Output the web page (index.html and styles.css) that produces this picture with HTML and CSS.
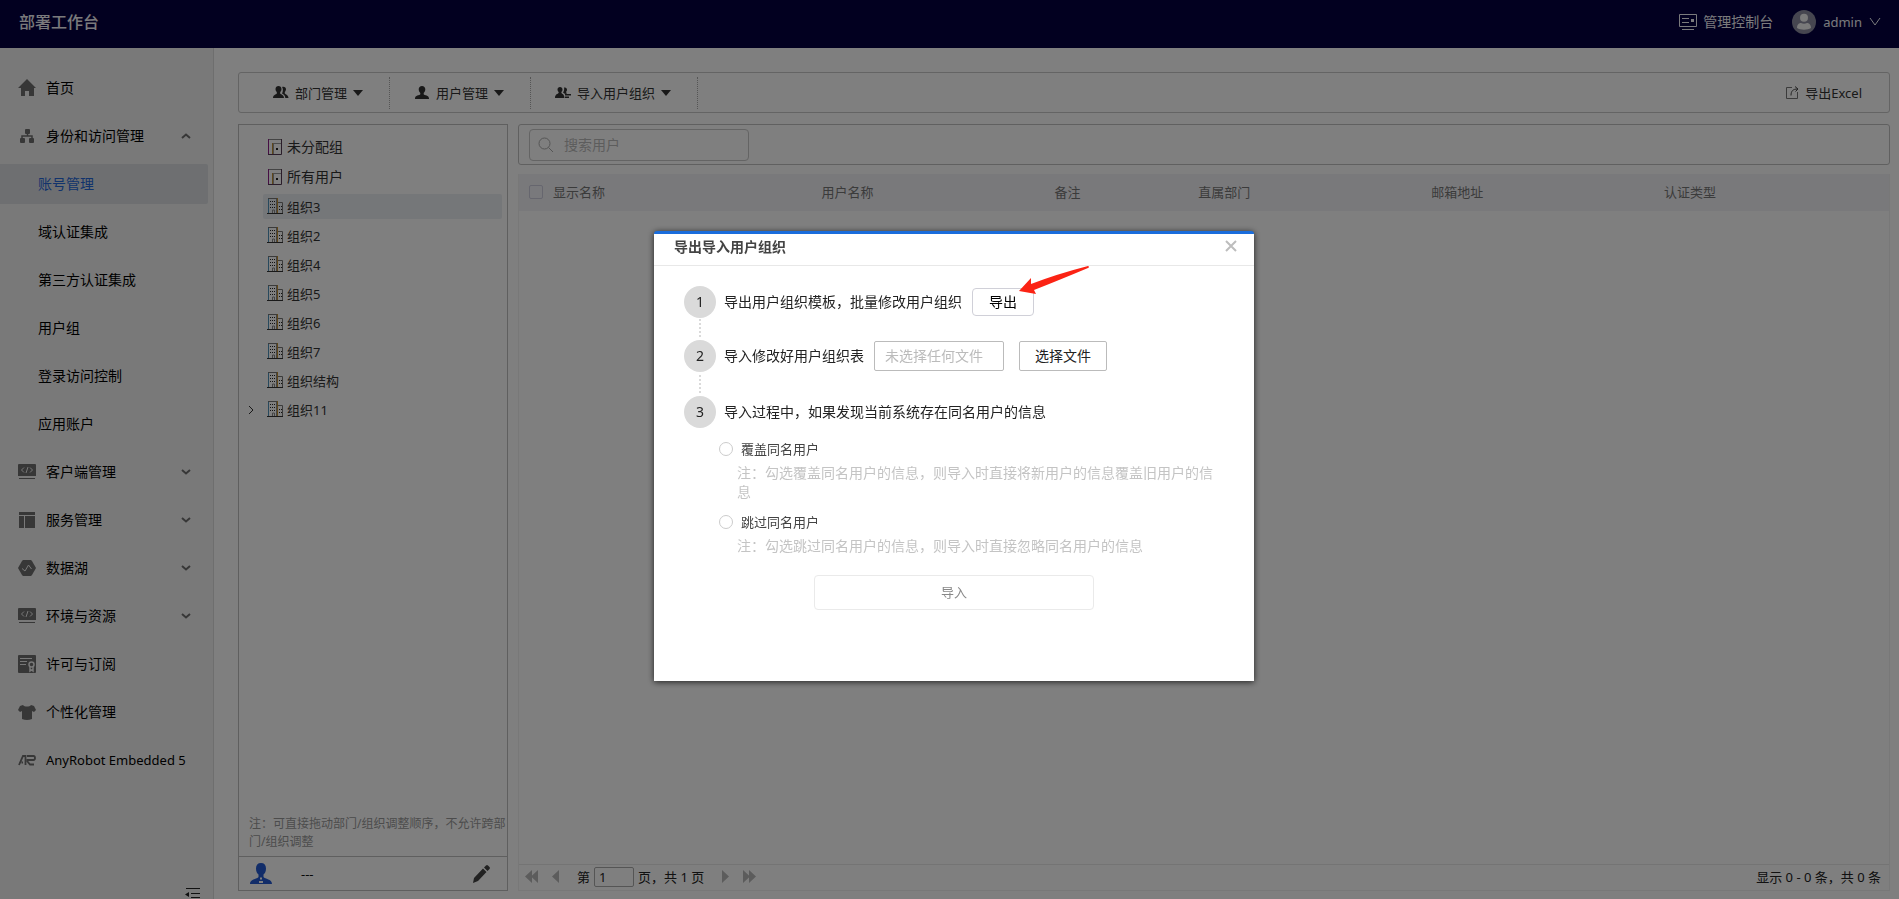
FILE: index.html
```html
<!DOCTYPE html>
<html lang="zh-CN">
<head>
<meta charset="utf-8">
<title>部署工作台</title>
<link rel="stylesheet" href="styles.css">
</head>
<body>
<svg class="sprite" aria-hidden="true">
  <symbol id="i-code" viewBox="0 0 18 16"><path fill="currentColor" fill-rule="evenodd" d="M1 0h16a1 1 0 0 1 1 1v11H0V1a1 1 0 0 1 1-1zM1 14h16v1H1z"/><path fill="none" stroke="#f0f0f0" d="M6 3.500L3.500 6 6 8.500M12 3.500L14.500 6 12 8.500M10 3L8 9"/></symbol>
  <symbol id="i-down" viewBox="0 0 10 6"><path fill="none" stroke="currentColor" stroke-width="2" d="M1 1l4 3.500L9 1"/></symbol>
  <symbol id="i-caret" viewBox="0 0 10 6"><path fill="currentColor" d="M0 0h10L5 6z"/></symbol>
  <symbol id="i-door" viewBox="0 0 16 17"><path fill="none" stroke="#888" d="M1 .5h13"/><path fill="none" stroke="#8c1c88" d="M.5 0v16"/><path fill="none" stroke="#553a55" d="M0 15.500h13.500V0"/><path fill="none" stroke="#c08f30" d="M4.500 15V4"/><path fill="none" stroke="#999" d="M5 4.500h8M5.500 5v10"/><path fill="#222" d="M8 9h2v2H8z"/></symbol>
  <symbol id="i-org" viewBox="0 0 17 17"><path fill="none" stroke="#777" d="M1 .5h9M11 4.500h4.500V15"/><path fill="none" stroke="#4f93ba" d="M1.500 1v14"/><path fill="none" stroke="#c08f30" d="M10.500 0v15"/><path fill="none" stroke="#888" d="M9.500 1v14M5.500 15v-3h2v3"/><path stroke="#333" d="M0 15.500h16"/><path fill="none" stroke="#222" stroke-dasharray="1 1" d="M3 3.500h6M3 6.500h6M3 9.500h6M12 8.500h3M12 11.500h3"/></symbol>
  <symbol id="i-person" viewBox="0 0 14 13"><path fill="currentColor" d="M7 0c2 0 3.300 1.300 3.300 3.300 0 1.700-.8 3-1.600 3.700v1.300c.8 1.200 5.300 1 5.300 4.200v.5H0v-.5c0-3.200 4.500-3 5.300-4.200V7c-.8-.7-1.600-2-1.600-3.700C3.700 1.300 5 0 7 0z"/></symbol>
</svg>

<header class="topbar">
  <h1 class="brand">部署工作台</h1>
  <a class="top-link" href="#"><svg width="18" height="17" viewBox="0 0 18 17"><path fill="none" stroke="currentColor" d="M.5.5h17v12H.5zM3 15.500h12M3 4.500h7M3 8.500h7"/><path fill="currentColor" d="M12 5h3v3h-3z"/></svg>管理控制台</a>
  <button class="user" type="button"><svg width="24" height="24" viewBox="0 0 24 24"><circle cx="12" cy="12" r="12" fill="#8d8da0"/><circle cx="12" cy="7.800" r="4" fill="#f4f4f4"/><path fill="#f4f4f4" d="M5 18c0-4 2.500-5 4-5 2 1 4 1 6 0 1.500 0 4 1 4 5-3.500 2.300-10.500 2.300-14 0z"/></svg><span class="latin">admin</span><svg width="12" height="8" viewBox="0 0 12 8"><path fill="none" stroke="currentColor" d="M1 0l5 7 5-7"/></svg></button>
</header>

<div class="shell">
  <nav class="sidebar">
    <a class="item" href="#"><svg width="18" height="18" viewBox="0 0 18 18"><path fill="currentColor" d="M9 0l9 9h-2v8h-5v-5H7v5H3V9H0z"/></svg><span>首页</span></a>
    <button class="item" type="button"><svg width="18" height="18" viewBox="0 0 18 18"><g fill="currentColor"><rect x="7" y="2" width="5" height="5" rx="1"/><rect x="2" y="11" width="5" height="5" rx="1"/><rect x="11" y="11" width="5" height="5" rx="1"/></g><path fill="none" stroke="currentColor" stroke-width="1.500" d="M4 12V9h10v3M9.500 6v3"/></svg><span>身份和访问管理</span><svg class="chev up" width="10" height="6"><use href="#i-down"/></svg></button>
    <a class="item sub active" href="#">账号管理</a>
    <a class="item sub" href="#">域认证集成</a>
    <a class="item sub" href="#">第三方认证集成</a>
    <a class="item sub" href="#">用户组</a>
    <a class="item sub" href="#">登录访问控制</a>
    <a class="item sub" href="#">应用账户</a>
    <button class="item" type="button"><svg width="18" height="16"><use href="#i-code"/></svg><span>客户端管理</span><svg class="chev" width="10" height="6"><use href="#i-down"/></svg></button>
    <button class="item" type="button"><svg width="18" height="16" viewBox="0 0 18 16"><path fill="currentColor" d="M1 0h16v3H1zM1 4h5v12H1zM7 4h10v12H7z"/></svg><span>服务管理</span><svg class="chev" width="10" height="6"><use href="#i-down"/></svg></button>
    <button class="item" type="button"><svg width="18" height="16" viewBox="0 0 18 16"><path fill="currentColor" d="M5 0h8l1 1 4 7-4 7-1 1H5l-1-1-4-7 4-7z"/><path fill="none" stroke="#f0f0f0" d="M4 8.500L7 11l3.500-6 3 4"/></svg><span>数据湖</span><svg class="chev" width="10" height="6"><use href="#i-down"/></svg></button>
    <button class="item" type="button"><svg width="18" height="16"><use href="#i-code"/></svg><span>环境与资源</span><svg class="chev" width="10" height="6"><use href="#i-down"/></svg></button>
    <a class="item" href="#"><svg width="18" height="18" viewBox="0 0 18 18"><rect width="18" height="18" rx="1" fill="currentColor"/><path stroke="#f0f0f0" d="M2 3.500h12M2 6.500h7M2 9.500h6"/><circle cx="13.500" cy="9.500" r="2.500" fill="none" stroke="#f0f0f0" stroke-width="1.500"/><path fill="none" stroke="#f0f0f0" stroke-width="1.500" d="M12 11.500V16l1.500-1 1.500 1v-4.500"/></svg><span>许可与订阅</span></a>
    <a class="item" href="#"><svg width="18" height="15" viewBox="0 0 18 15"><path fill="currentColor" d="M5 0c1.500 2 6.500 2 8 0l3 1 2 4-2 2-2-1v8q-5 2-10 0V6L2 7 0 5l2-4z"/></svg><span>个性化管理</span></a>
    <a class="item" href="#"><svg width="18" height="11" viewBox="0 0 18 11"><path fill="none" stroke="currentColor" stroke-width="1.800" d="M1 10l4-9h2.500v9M3.500 7.500H5M9 1h6.500q1.500 0 1.500 2t-1.500 2H9.500v1.500L12 9.500h4"/></svg><span class="latin">AnyRobot Embedded 5</span></a>
    <button class="fold" type="button" aria-label="收起"><svg width="15" height="11" viewBox="0 0 15 11"><path fill="none" stroke="#222" d="M1 .5h14M6 5.500h9M6 9.500h9"/><path fill="#222" d="M4 4v5L0 6.500z"/></svg></button>
  </nav>

  <main class="content">
    <div class="toolbar">
      <button class="tool" type="button"><svg width="16" height="13" viewBox="0 0 16 13"><path fill="currentColor" d="M5.500 0c1.700 0 3 1.200 3 3 0 1.500-.7 2.500-1.300 3v1.500c.8 1.200 3.800 1.200 3.800 4.500H0c0-3.300 3-3.300 3.800-4.500V6C3.200 5.500 2.500 4.500 2.500 3c0-1.800 1.300-3 3-3zM9 1c2.300-.8 4 .3 4 2.300 0 1.200-.6 2.200-1.200 2.700v1.500c.8 1 3.700 1.500 3.700 4.500h-3.200c0-2.500-1.500-3.500-3.300-4.500.8-1 1.500-4.500 0-6.500z"/></svg><span>部门管理</span><svg width="10" height="6"><use href="#i-caret"/></svg></button>
      <button class="tool" type="button"><svg width="16" height="13"><use href="#i-person"/></svg><span>用户管理</span><svg width="10" height="6"><use href="#i-caret"/></svg></button>
      <button class="tool" type="button"><svg width="16" height="13" viewBox="0 0 16 13"><path fill="currentColor" d="M5 1c1.500 0 2.500 1 2.500 2.600 0 1.200-.6 2-1.100 2.500v1c.7 1 3 1 3 4.900H0c0-3.900 2.900-3.900 3.600-4.900v-1C3.100 5.600 2.500 4.800 2.500 3.600 2.500 2 3.500 1 5 1zM9 1.500c2-.5 3 .7 3 2.200 0 1-.5 1.800-1 2.200l1 1.600-2 .5L8 6.500c1-1 1.500-3.500 1-5zM10 8h6v1.500h-6zM10 10.500h4V12h-4z"/></svg><span>导入用户组织</span><svg width="10" height="6"><use href="#i-caret"/></svg></button>
      <button class="export" type="button"><svg width="13" height="13" viewBox="0 0 13 13"><path fill="none" stroke="#777" d="M6 1.500H.5v11h11V6"/><path fill="none" stroke="#444" d="M5 9.500C5 5 7 3 11.500 3M9 .5l3 2.500-2.500 2.500"/></svg>导出Excel</button>
    </div>

    <div class="columns">
      <section class="tree-panel">
        <ul class="tree">
          <li class="node root"><svg width="16" height="17"><use href="#i-door"/></svg>未分配组</li>
          <li class="node root"><svg width="16" height="17"><use href="#i-door"/></svg>所有用户</li>
          <li class="node selected"><svg width="17" height="17"><use href="#i-org"/></svg>组织3</li>
          <li class="node"><svg width="17" height="17"><use href="#i-org"/></svg>组织2</li>
          <li class="node"><svg width="17" height="17"><use href="#i-org"/></svg>组织4</li>
          <li class="node"><svg width="17" height="17"><use href="#i-org"/></svg>组织5</li>
          <li class="node"><svg width="17" height="17"><use href="#i-org"/></svg>组织6</li>
          <li class="node"><svg width="17" height="17"><use href="#i-org"/></svg>组织7</li>
          <li class="node"><svg width="17" height="17"><use href="#i-org"/></svg>组织结构</li>
          <li class="node parent"><svg class="arrow" width="6" height="10" viewBox="0 0 6 10"><path fill="none" stroke="currentColor" d="M1 1l4 4-4 4"/></svg><svg width="17" height="17"><use href="#i-org"/></svg>组织11</li>
        </ul>
        <p class="tip">注：可直接拖动部门/组织调整顺序，不允许跨部门/组织调整</p>
        <div class="manager">
          <svg width="22" height="21" viewBox="0 0 22 21"><path fill="#245bd2" d="M11 0c3.300 0 5 2 5 5.500 0 3-1 5-2.500 6V14c1.500 2 8.500 2 8.500 7H0c0-5 7-5 8.500-7v-2.500C7 10.500 6 8.500 6 5.500 6 2 7.700 0 11 0z"/><path fill="#fff" d="M10 14.500h2v2h-2zM9 18h4v2H9z"/></svg>
          <span>---</span>
          <button class="edit" type="button" aria-label="编辑"><svg width="17" height="18" viewBox="0 0 17 18"><path fill="#444" d="M0 18l1-5 9-9.500 3.500 3.500L5 16zM11 2.500L13 .5q1-.8 2 0l1.500 1.500q.8 1 0 2L14.500 6z"/></svg></button>
        </div>
      </section>

      <section class="list-panel">
        <div class="searchbar">
          <label class="search"><svg width="16" height="16" viewBox="0 0 16 16"><circle cx="6.500" cy="6.500" r="5.500" fill="none" stroke="currentColor"/><path stroke="currentColor" d="M10.500 10.500L15 15"/></svg><input type="text" placeholder="搜索用户" aria-label="搜索用户"></label>
        </div>
        <div class="grid">
          <table>
            <thead><tr>
              <th class="w-name"><label class="check"><input type="checkbox">显示名称</label></th>
              <th class="w-col">用户名称</th><th class="w-note">备注</th><th class="w-col">直属部门</th><th class="w-col">邮箱地址</th><th class="w-col">认证类型</th>
            </tr></thead>
          </table>
          <div class="pager">
            <button type="button" aria-label="首页"><svg width="14" height="13" viewBox="0 0 14 13"><path fill="currentColor" d="M7 0v13L0 6.500zM13 0v13L6 6.500z"/></svg></button>
            <button type="button" aria-label="上一页"><svg width="14" height="13" viewBox="0 0 14 13"><path fill="currentColor" d="M10 0v13L3 6.500z"/></svg></button>
            <label class="page-no">第<input type="text" value="1">页，共 1 页</label>
            <button type="button" aria-label="下一页"><svg width="14" height="13" viewBox="0 0 14 13"><path fill="currentColor" d="M4 0v13l7-6.500z"/></svg></button>
            <button type="button" aria-label="末页"><svg width="14" height="13" viewBox="0 0 14 13"><path fill="currentColor" d="M1 0v13l7-6.500zM7 0v13l7-6.500z"/></svg></button>
            <span class="total">显示 0 - 0 条，共 0 条</span>
          </div>
        </div>
      </section>
    </div>
  </main>
</div>

<div class="mask">
  <section class="dialog" role="dialog" aria-labelledby="dlg-title">
    <div class="dialog-head">
      <h2 id="dlg-title">导出导入用户组织</h2>
      <button class="close" type="button" aria-label="关闭"><svg width="12" height="12" viewBox="0 0 12 12"><path fill="none" stroke="#bdbdbd" stroke-width="2" d="M1 1l10 10M11 1L1 11"/></svg></button>
    </div>
    <div class="dialog-body">
      <div class="step"><span class="num">1</span><span>导出用户组织模板，批量修改用户组织</span><button class="btn soft" type="button">导出</button>
        <svg class="pointer" width="71" height="29" viewBox="0 0 71 29"><path fill="#fb2314" d="M0 25L12 12v6Q38 8 69 0q2 1 0 2Q38 15 15 24l2 4z"/></svg></div>
      <div class="link"></div>
      <div class="step"><span class="num">2</span><label for="file-name">导入修改好用户组织表</label><input class="file" id="file-name" type="text" placeholder="未选择任何文件"><button class="btn pick" type="button">选择文件</button></div>
      <div class="link long"></div>
      <div class="step"><span class="num">3</span><span>导入过程中，如果发现当前系统存在同名用户的信息</span></div>
      <div class="choices">
        <div class="choice"><label><input type="radio" name="same">覆盖同名用户</label><p>注：勾选覆盖同名用户的信息，则导入时直接将新用户的信息覆盖旧用户的信息</p></div>
        <div class="choice"><label><input type="radio" name="same">跳过同名用户</label><p>注：勾选跳过同名用户的信息，则导入时直接忽略同名用户的信息</p></div>
      </div>
      <button class="submit" type="button">导入</button>
    </div>
  </section>
</div>
</body>
</html>
```
FILE: styles.css
```css
* { box-sizing: border-box; }
body {
  margin: 0;
  height: 100vh;
  display: flex;
  flex-direction: column;
  overflow: hidden;
  background: #fff;
  color: #000;
  font: 14px/20px "Noto Sans", "Noto Sans CJK SC", sans-serif;
}
button, input {
  font: inherit;
  color: inherit;
  margin: 0;
}
button {
  padding: 0;
  border: 0;
  background: none;
  text-align: left;
}
a { color: inherit; text-decoration: none; }
svg { display: block; flex: none; }
.sprite { position: absolute; width: 0; height: 0; }
h1, h2, p, ul { margin: 0; padding: 0; }
.latin { font-size: 13px; }

/* top bar */
.topbar {
  flex: none;
  display: flex;
  align-items: center;
  height: 48px;
  padding: 0 18px 4px 19px;
  background: #040040;
  color: #f4f4f8;
}
.brand { margin-right: auto; font-size: 16px; font-weight: 500; }
.top-link { display: flex; align-items: center; gap: 6px; margin-right: 19px; }
.user { display: flex; align-items: center; gap: 7px; }

/* side navigation */
.shell { flex: 1; display: flex; min-height: 0; }
.sidebar {
  flex: none;
  display: flex;
  flex-direction: column;
  gap: 8px;
  width: 214px;
  padding: 20px 5px 0 0;
  border-right: 1px solid #dcdcdc;
  background: #f3f3f3;
}
.item {
  flex: none;
  display: flex;
  align-items: center;
  gap: 10px;
  width: 100%;
  height: 40px;
  padding: 0 17px 0 18px;
  white-space: nowrap;
}
.item > svg { color: #6e6e6e; }
.item .chev { margin-left: auto; }
.chev.up { transform: rotate(180deg); }
.item.sub { padding-left: 38px; }
.item.active {
  border-radius: 0 2px 2px 0;
  background: #dcdfe3;
  color: #2566d8;
}
.fold { margin: auto 8px 0 auto; }

/* main area */
.content {
  flex: 1;
  display: flex;
  flex-direction: column;
  gap: 11px;
  min-width: 0;
  padding: 24px 9px 8px 24px;
  font-size: 13px;
  color: #333;
}
.toolbar {
  flex: none;
  display: flex;
  align-items: center;
  height: 41px;
  padding-left: 10px;
  border: 1px solid #c8c8c8;
  border-radius: 3px;
}
.tool {
  display: flex;
  align-items: center;
  gap: 6px;
  height: 32px;
  padding: 0 26px 0 24px;
  border-right: 1px dotted #aaa;
}
.tool svg { color: #333; }
.export {
  display: flex;
  align-items: center;
  gap: 6px;
  margin-left: auto;
  padding-right: 27px;
}
.columns { flex: 1; display: flex; gap: 10px; min-height: 0; }

.tree-panel {
  flex: none;
  display: flex;
  flex-direction: column;
  width: 270px;
  border: 1px solid #bebebe;
}
.tree { flex: 1; padding: 9px 5px 0 8px; list-style: none; }
.node {
  display: flex;
  align-items: center;
  gap: 3px;
  height: 25px;
  margin: 0 0 4px 16px;
  padding-left: 4px;
  border-radius: 2px;
}
.node.root { height: 26px; font-size: 14px; padding-left: 5px; }
.node.selected { background: #ebeef2; }
.node.parent { margin-left: 0; padding-left: 1px; }
.arrow { margin-right: 10px; }
.tip {
  padding: 0 0 5px 10px;
  color: #999;
  font-size: 12px;
  line-height: 18px;
}
.manager {
  display: flex;
  align-items: center;
  gap: 29px;
  height: 34px;
  padding: 0 17px 0 11px;
  border-top: 1px solid #bebebe;
  color: #111;
}
.edit { margin-left: auto; }

.list-panel { flex: 1; display: flex; flex-direction: column; gap: 9px; min-width: 0; }
.searchbar {
  flex: none;
  height: 41px;
  padding: 4px 10px;
  border: 1px solid #c0c0c0;
  border-radius: 3px;
}
.search {
  display: flex;
  align-items: center;
  gap: 10px;
  width: 220px;
  height: 32px;
  padding: 0 8px;
  border: 1px solid #c8c8c8;
  border-radius: 4px;
  color: #aaa;
}
.search input {
  width: 150px;
  padding: 0;
  border: 0;
  background: none;
  font-size: 14px;
}
input::placeholder { color: #bbb; opacity: 1; }
.grid {
  flex: 1;
  display: flex;
  flex-direction: column;
  border: 1px solid #f0f0f0;
  border-top: 0;
}
table { width: 100%; table-layout: fixed; border-collapse: collapse; }
th {
  height: 37px;
  padding: 0 8px 2px;
  background: #f3f3f7;
  color: #777;
  font-weight: 400;
  text-align: left;
}
.w-name { width: 21.5%; padding-left: 10px; }
.w-col { width: 17%; }
.w-note { width: 10.5%; }
.check { display: flex; align-items: center; gap: 10px; }
.check input {
  appearance: none;
  width: 14px;
  height: 14px;
  border: 1px solid #ccd;
  border-radius: 2px;
  background: #f3f3f9;
}
.pager {
  display: flex;
  align-items: center;
  height: 26px;
  margin-top: auto;
  padding: 0 8px 2px 6px;
  border-top: 1px solid #e9e9e9;
}
.pager button { margin-right: 10px; color: #b8b8b8; }
.page-no { display: flex; align-items: center; margin: 0 14px 0 4px; color: #222; }
.page-no input {
  width: 40px;
  height: 20px;
  margin: 0 4px;
  padding: 0 4px;
  border: 1px solid #aaa;
  border-radius: 2px;
}
.total { margin-left: auto; color: #222; }

/* dialog */
.mask {
  position: fixed;
  inset: 0;
  display: flex;
  align-items: center;
  justify-content: center;
  padding: 12px 0 0 9px;
  background: rgba(0, 0, 0, .5);
}
.dialog {
  width: 600px;
  min-height: 450px;
  border-top: 3px solid #1a6ddc;
  border-radius: 3px 3px 0 0;
  background: #fff;
  box-shadow: 0 1px 6px rgba(0, 0, 0, .75);
  color: #222;
}
.dialog-head {
  display: flex;
  align-items: center;
  justify-content: space-between;
  height: 32px;
  padding: 0 17px 6px 20px;
  border-bottom: 1px solid #e8e8e8;
}
.dialog-head h2 { padding-top: 2px; color: #444; font-size: 14px; line-height: 20px; }
.dialog-body { padding: 20px 30px 0; }
.step { position: relative; display: flex; align-items: center; height: 32px; }
.num {
  width: 32px;
  height: 32px;
  margin-right: 8px;
  border-radius: 50%;
  background: #dadada;
  line-height: 32px;
  text-align: center;
}
.link {
  width: 2px;
  height: 20px;
  margin: 1px 0 1px 15px;
  background: repeating-linear-gradient(#dadada 0 2px, transparent 2px 4px);
}
.link.long { margin-top: 3px; }
.btn {
  border: 1px solid #bbb;
  border-radius: 2px;
  background: #fff;
  text-align: center;
}
.btn.soft {
  width: 62px;
  height: 28px;
  margin-left: 10px;
  border-color: #d0d0d8;
  border-radius: 4px;
  color: #000;
}
.pointer { position: absolute; left: 335px; top: -20px; }
.file {
  width: 130px;
  height: 30px;
  margin-left: 10px;
  padding: 0 10px;
  border: 1px solid #bbb;
  border-radius: 2px;
}
.pick { width: 88px; height: 30px; margin-left: 15px; }
.choices { padding: 10px 0 0 35px; }
.choice { margin-bottom: 10px; }
.choice label {
  display: flex;
  align-items: center;
  gap: 8px;
  height: 22px;
  margin-bottom: 3px;
  color: #444;
  font-size: 13px;
}
.choice input {
  appearance: none;
  width: 14px;
  height: 14px;
  border: 1px solid #ccc;
  border-radius: 50%;
}
.choice p { padding: 0 10px 0 18px; color: #c4c4c4; line-height: 19px; }
.submit {
  display: block;
  width: 280px;
  height: 35px;
  margin: 20px auto 0;
  border: 1px solid #eaeaea;
  border-radius: 4px;
  color: #888;
  font-size: 13px;
  text-align: center;
}
```
